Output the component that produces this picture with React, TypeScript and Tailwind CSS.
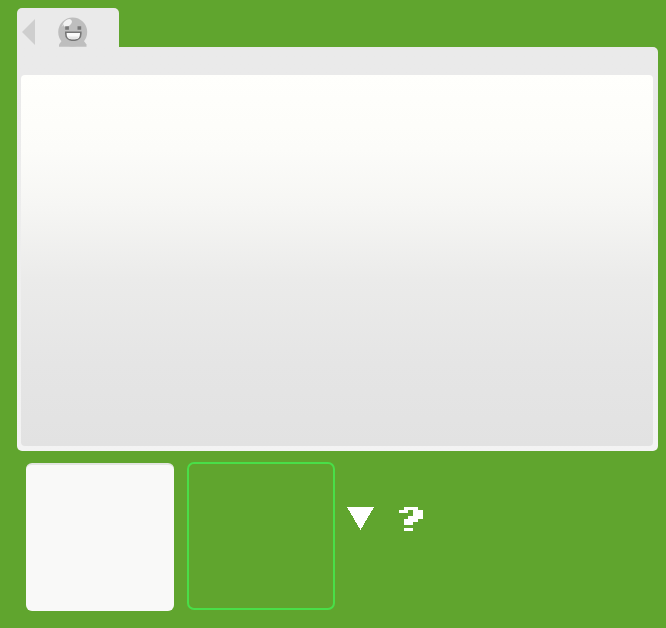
function GhostIcon() {
  return (
    <svg className="h-[30px] w-[30px]" viewBox="0 0 30 30" aria-hidden="true">
      <circle cx="14.7" cy="15.1" r="14.5" fill="#bebebe" />
      <path d="M1 29.700v-2.200l3-4h21.500l3 4v2.200Z" fill="#bebebe" />
      <path d="M4 9.500Q5.500 4.500 10.500 2.500" fill="none" stroke="#d6d6d6" />
      <ellipse cx="9.6" cy="6" rx="4.700" ry="3.100" transform="rotate(-38 9.6 6)" fill="#f2f2f2" />
      <path d="M7.200 9.300h3.700v3.400H7.200ZM19.500 9.300h3.700v3.400h-3.700Z" fill="#777" />
      <path d="M7.800 15.200h15v1.500c0 3.800-2.500 6.400-5.800 6.400h-3.400c-3.300 0-5.800-2.600-5.800-6.400Z" fill="#fafafa" stroke="#747474" strokeWidth="1.6" />
      <path d="M10 19.500h10.600c-.8 1.800-2 2.700-3.700 2.700h-3.200c-1.700 0-2.900-.9-3.700-2.700Z" fill="#e6e6e6" />
    </svg>
  );
}

export default function App() {
  return (
    <main className="h-[628px] w-[666px] overflow-hidden bg-[#60a52e] pt-2 pl-[17px]">
      <div className="flex h-[39px] w-[102px] items-start rounded-t-[5px] bg-[#eaeaea]">
        <button className="mt-[11px] ml-[5px] block h-[26px] w-[13px]" aria-label="Back">
          <svg className="block h-[26px] w-[13px]" viewBox="0 0 13 26">
            <path d="M13 0v26L0 13Z" fill="#cecece" />
          </svg>
        </button>
        <div className="mt-[9px] ml-[23px]">
          <GhostIcon />
        </div>
      </div>

      <section className="h-[404px] w-[641px] rounded-tr-[5px] rounded-b-[5px] bg-linear-to-b from-[#eaeaea] from-10% to-[#f3f3f3] px-1 pt-7">
        <div className="h-[371px] w-[632px] rounded-[4px] bg-[linear-gradient(to_bottom,#fffffc_0%,#fcfcf9_20%,#f6f6f4_35%,#ebebea_55%,#e5e5e5_78%,#e2e2e2_100%)]" />
      </section>

      <div className="mt-3 flex items-start pl-[9px]">
        <div className="h-[148px] w-[148px] rounded-[6px] border-t-2 border-[#e3e5e2] bg-[#f9f9f8]" />
        <div className="-mt-px ml-[13px] h-[148px] w-[148px] rounded-[7px] border-2 border-[#49df48]" />
        <button className="mt-11 ml-3 block h-[23px] w-[27px]" aria-label="Show more">
          <svg className="block h-[23px] w-[27px]" viewBox="0 0 27 23" shapeRendering="crispEdges">
            <path d="M0 0h27L13.500 23Z" fill="#fff" />
          </svg>
        </button>
        <button className="mt-11 ml-[25px] block h-6 w-6" aria-label="Help">
          <svg className="block h-6 w-6" viewBox="0 0 24 24" shapeRendering="crispEdges">
            <path d="M5 0h14v3h5v9h-5v3h-5v3H5v-6h4V9h5V3H9v3H0V3h5ZM5 21h9v3H5Z" fill="#fff" />
          </svg>
        </button>
      </div>
    </main>
  );
}
